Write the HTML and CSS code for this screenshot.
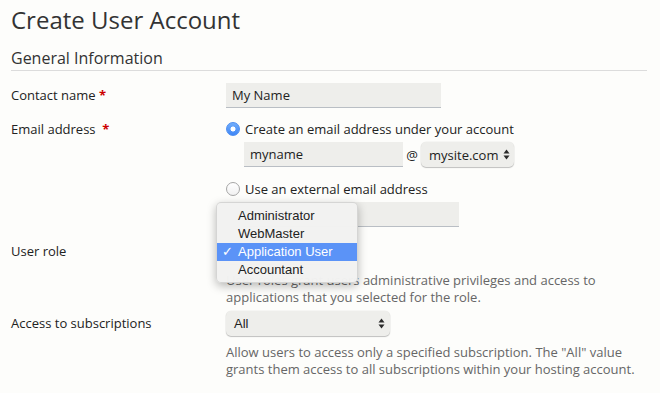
FILE: index.html
```html
<!DOCTYPE html>
<html>
<head>
<meta charset="utf-8">
<link rel="stylesheet" href="styles.css">
</head>
<body>
<h1 class="title">Create User Account</h1>
<h2 class="section">General Information</h2>
<div class="form">
  <div class="row">
    <div class="label">Contact name <span class="req">*</span></div>
    <div class="field"><div class="input w-wide">My Name</div></div>
  </div>
  <div class="row">
    <div class="label label-line">Email address &nbsp;<span class="req">*</span></div>
    <div class="field">
      <div class="radio-line"><span class="radio on"></span>Create an email address under your account</div>
      <div class="sub sub-inline">
        <div class="input w-name">myname</div>
        <span class="at">@</span>
        <div class="select w-site"><span>mysite.com</span><svg class="arrows" width="7" height="11" viewBox="0 0 7 11"><polygon points="0.5,4.5 3.5,0.5 6.5,4.5" /><polygon points="0.5,6.5 3.5,10.5 6.5,6.5" /></svg></div>
      </div>
      <div class="radio-line second"><span class="radio"></span>Use an external email address</div>
      <div class="sub"><div class="input w-wide"></div></div>
    </div>
  </div>
  <div class="row row-role">
    <div class="label">User role</div>
    <div class="field">
      <div class="anchor">
        <div class="select w-role"><span>Application User</span></div>
        <div class="menu">
          <div class="item">Administrator</div>
          <div class="item">WebMaster</div>
          <div class="item active"><span class="check">✓</span>Application User</div>
          <div class="item">Accountant</div>
        </div>
      </div>
      <p class="desc">User roles grant users administrative privileges and access to applications that you selected for the role.</p>
    </div>
  </div>
  <div class="row row-access">
    <div class="label">Access to subscriptions</div>
    <div class="field">
      <div class="select w-all"><span class="sys">All</span><svg class="arrows" width="7" height="11" viewBox="0 0 7 11"><polygon points="0.5,4.5 3.5,0.5 6.5,4.5" /><polygon points="0.5,6.5 3.5,10.5 6.5,6.5" /></svg></div>
      <p class="desc">Allow users to access only a specified subscription. The "All" value grants them access to all subscriptions within your hosting account.</p>
    </div>
  </div>
</div>
</body>
</html>
```

FILE: styles.css
```css
html, body {
  background: #fdfdfb;
}
body {
  margin: 0;
  padding: 4px 13px 0 11px;
  font-family: "Open Sans", "DejaVu Sans", sans-serif;
  font-size: 13px;
  color: #222;
}
.title {
  margin: 0;
  font-size: 24px;
  font-weight: 400;
  line-height: 32px;
  color: #333;
}
.section {
  margin: 11px 0 0;
  font-size: 16px;
  font-weight: 400;
  line-height: 22px;
  color: #333;
  padding-bottom: 1px;
  border-bottom: 1px solid #dcdcdc;
}
.form {
  margin-top: 12px;
}
.row {
  display: grid;
  grid-template-columns: 215px 1fr;
}
.row + .row {
  margin-top: 12px;
}
.label {
  line-height: 25px;
}
.label-line {
  line-height: 18px;
}
.req {
  color: #c00;
  font-weight: 700;
}
.input {
  box-sizing: border-box;
  height: 25px;
  background: #eeeeeb;
  border-bottom: 1px solid #b9bec4;
  padding: 0 6px;
  line-height: 24px;
}
.w-wide { width: 215px; }
.w-name { width: 159px; }
.radio-line {
  display: flex;
  align-items: center;
  line-height: 18px;
}
.radio-line.second {
  margin-top: 13px;
}
.radio {
  box-sizing: border-box;
  width: 14px;
  height: 14px;
  border-radius: 50%;
  margin-right: 5px;
  border: 1px solid #a6a6a6;
  background: linear-gradient(#fff, #f1f1f1);
  flex: none;
}
.radio.on {
  border: 1px solid #4d8ef0;
  background: radial-gradient(circle, #fff 0 2.2px, transparent 2.8px), linear-gradient(#72aefb, #3f86f6);
}
.sub {
  margin-top: 4px;
  padding-left: 18px;
}
.sub-inline {
  display: flex;
  align-items: center;
}
.at {
  width: 18px;
  text-align: center;
}
.select {
  box-sizing: border-box;
  height: 25px;
  border-radius: 5px;
  background: #eeeeeb;
  box-shadow: 0 1px 1px rgba(0, 0, 0, 0.22), 0 0 0 0.5px rgba(0, 0, 0, 0.06);
  display: flex;
  align-items: center;
  justify-content: space-between;
  padding: 0 4px 0 9px;
}
.w-site { width: 93px; padding-left: 8px; }
.w-role { width: 125px; }
.w-all { width: 164px; padding-left: 8px; padding-right: 5px; }
.arrows {
  fill: #2a2a2a;
  flex: none;
}
.sys {
  font-family: "Liberation Sans", Arial, sans-serif;
  font-size: 13px;
}
.anchor {
  position: relative;
}
.menu {
  position: absolute;
  left: -10px;
  top: -37px;
  width: 142px;
  box-sizing: border-box;
  padding: 4px 0 3px;
  background: rgba(242, 242, 241, 0.98);
  border: 1px solid rgba(0, 0, 0, 0.12);
  border-radius: 5px;
  box-shadow: 0 3px 10px rgba(0, 0, 0, 0.28);
  font-family: "Liberation Sans", Arial, sans-serif;
  font-size: 13px;
  color: #222;
}
.item {
  position: relative;
  height: 18px;
  line-height: 18px;
  padding-left: 21px;
}
.item.active {
  background: #5b93f7;
  color: #fff;
}
.check {
  position: absolute;
  left: 5px;
  top: 0;
}
.desc {
  margin: 8px 0 0;
  width: 420px;
  line-height: 17px;
  color: #666;
}
.row-access {
  margin-top: 5px !important;
}
```
